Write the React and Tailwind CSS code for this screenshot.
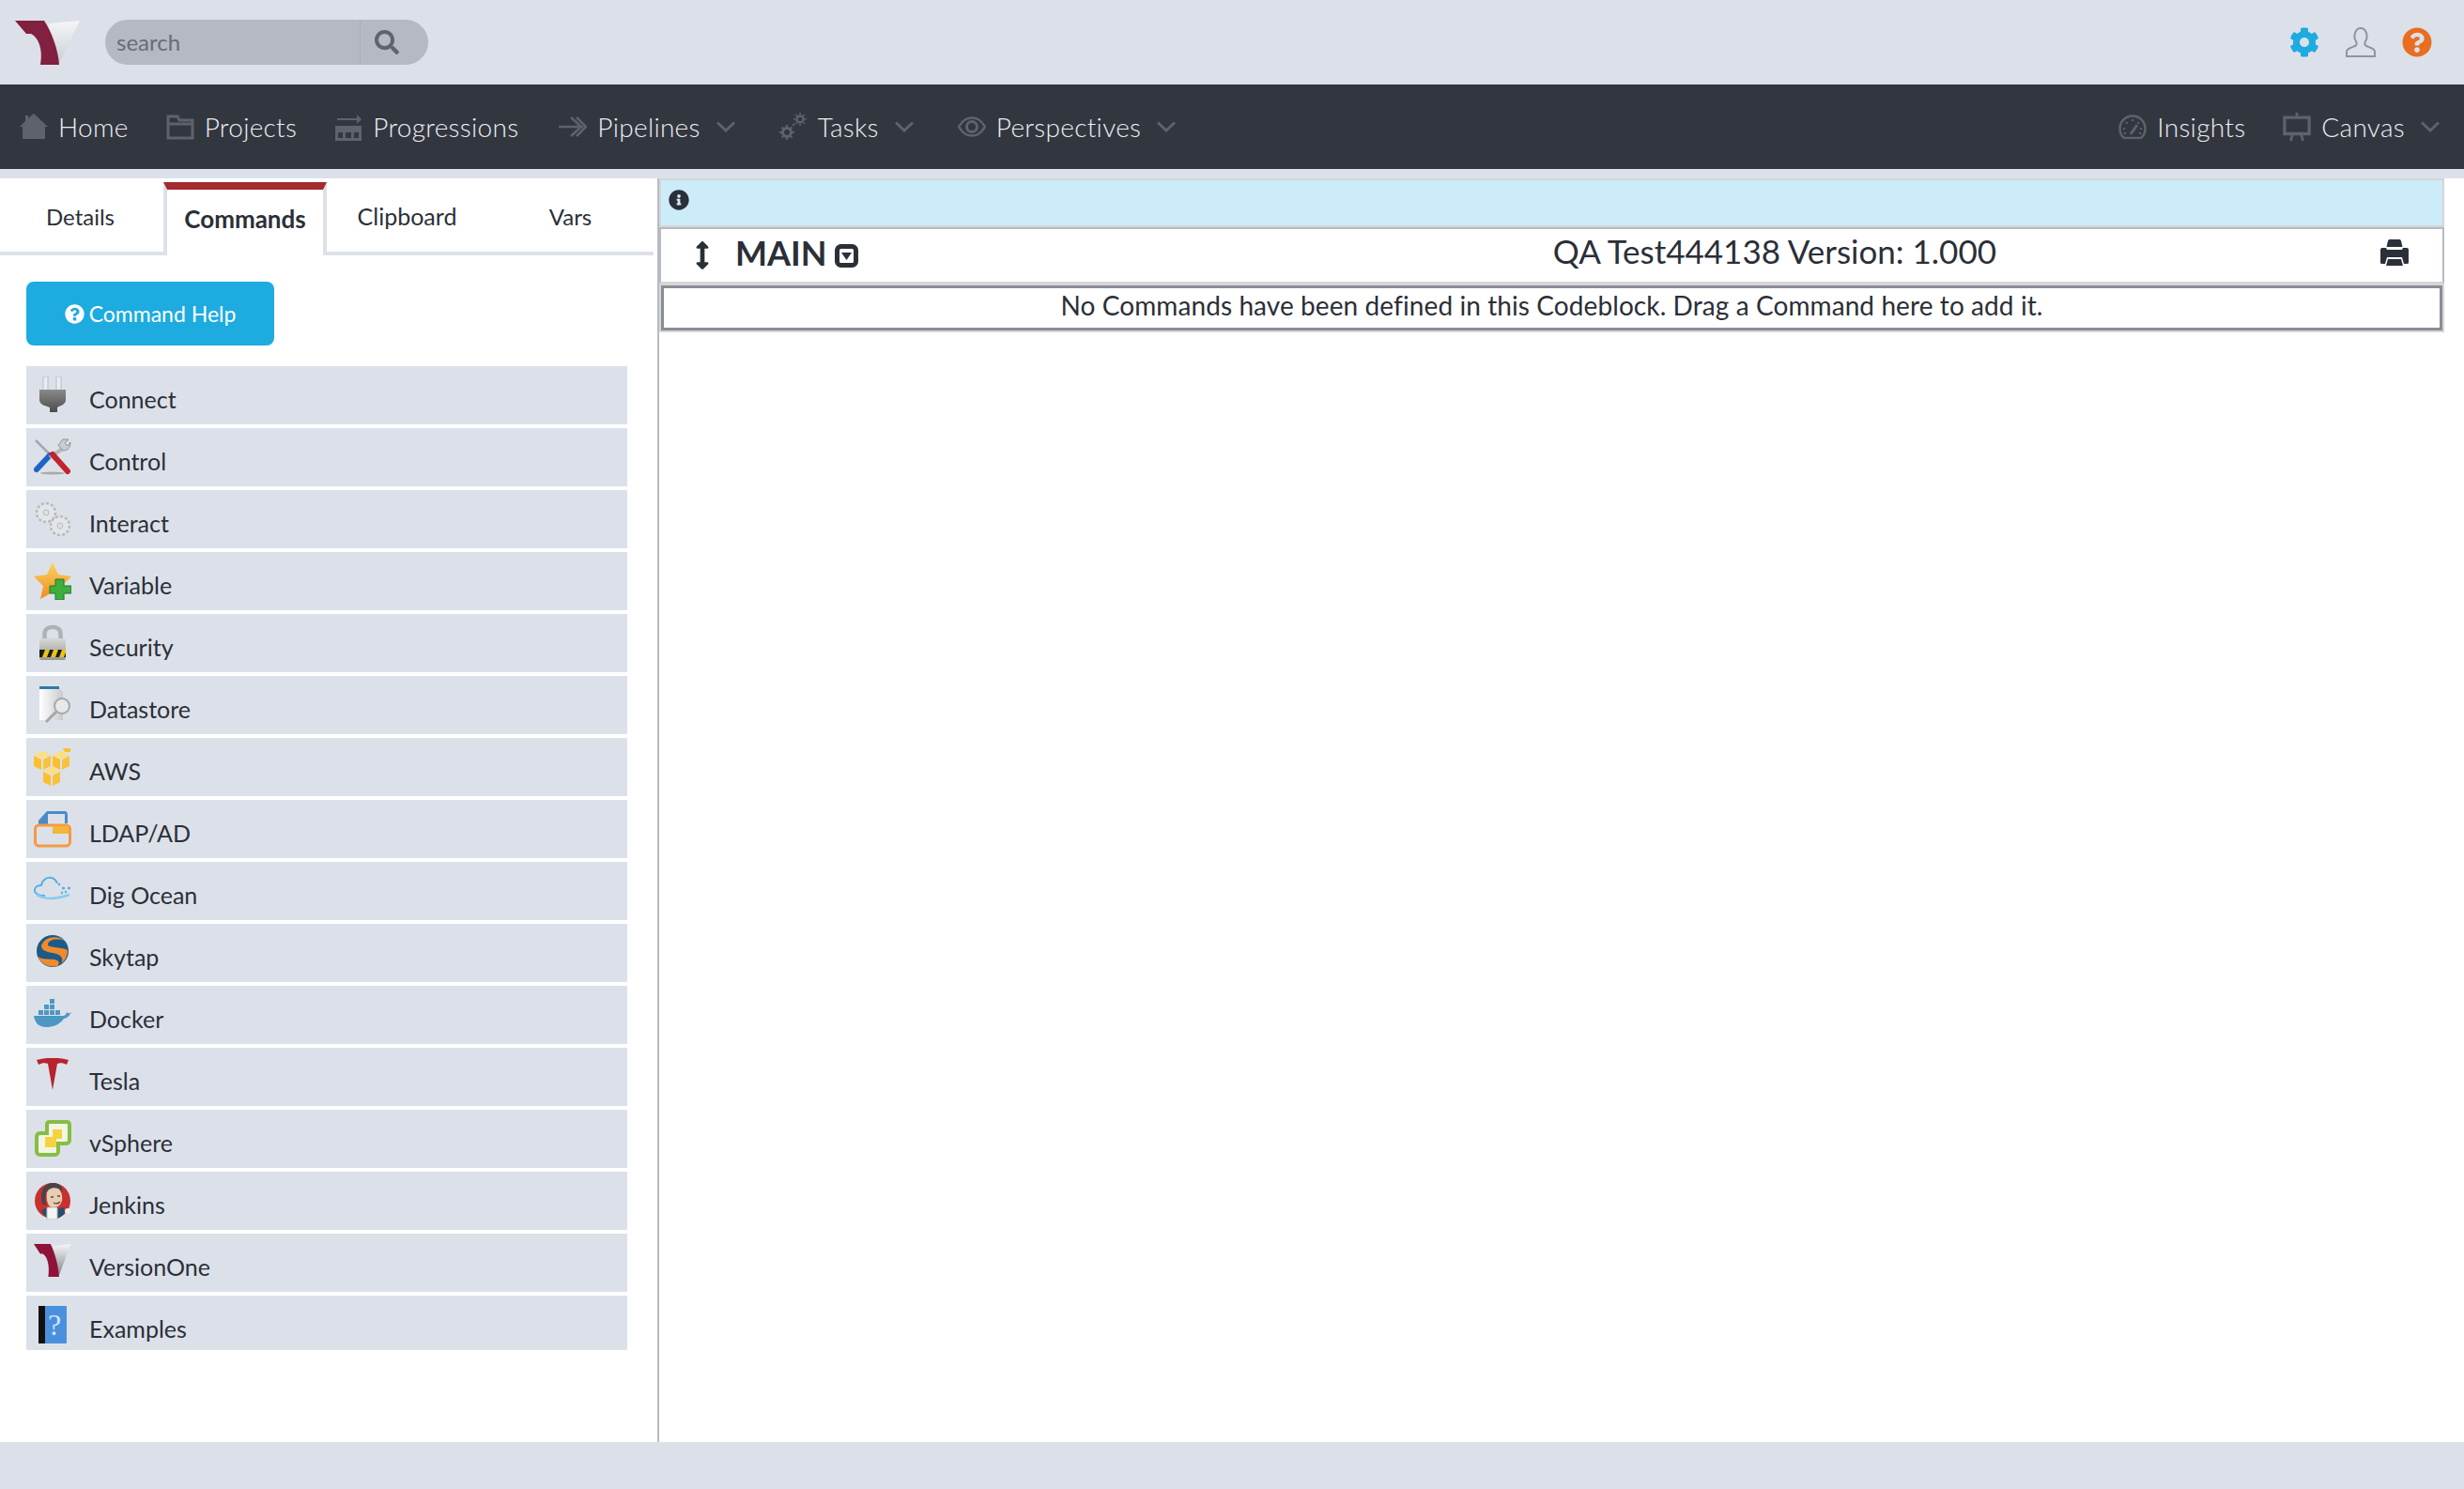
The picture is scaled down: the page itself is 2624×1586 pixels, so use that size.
import {
  FaArrowsAltV,
  FaCog,
  FaInfoCircle,
  FaQuestionCircle,
  FaSearch,
} from 'react-icons/fa';

const Chevron = () => (
  <svg width="20" height="12" viewBox="0 0 20 12" fill="none" stroke="#5d626c" strokeWidth="3">
    <path d="M1 1.5 10 10 19 1.5" />
  </svg>
);

const VersionOneLogo = ({ w = 70, h = 47, id = 'v1', wingEnd = '#c9cdd4', red = '#82203f' }) => (
  <svg width={w} height={h} viewBox="0 0 70 47" preserveAspectRatio="none">
    <defs>
      <linearGradient id={id} x1="0" y1="0" x2="0" y2="1">
        <stop offset="0" stopColor="#f4f6f9" />
        <stop offset="1" stopColor={wingEnd} />
      </linearGradient>
    </defs>
    <path d="M36 3 69 0 46 47H40Z" fill={`url(#${id})`} />
    <path d="M0 0H31C38 10 46 30 47 47H27C30 30 25 18 17 14H12Z" fill={red} />
  </svg>
);

// nav icons
const HomeIcon = () => (
  <svg width="30" height="28" viewBox="0 0 30 28" fill="#5d626c">
    <path d="M15 0 30 14H27V27H3V14H0L6 8V2H9V5Z" />
  </svg>
);
const FolderIcon = () => (
  <svg width="30" height="27" viewBox="0 0 30 27" fill="none" stroke="#5d626c" strokeWidth="3">
    <path d="M2 2H12L14 6H28V25H2Z" />
    <path d="M2 10H28" />
  </svg>
);
const ProgressIcon = () => (
  <svg width="29" height="30" viewBox="0 0 29 30" fill="#5d626c">
    <path d="M2 6H23V2L28 7 23 12V8H2Z" />
    <path d="M0 14H28V30H0ZM3 21V27H8V21ZM11 21V27H17V21ZM20 21V27H25V21Z" fillRule="evenodd" />
  </svg>
);
const PipelineIcon = () => (
  <svg width="30" height="22" viewBox="0 0 30 22" fill="none" stroke="#5d626c" strokeWidth="2.5">
    <path d="M0 11H26M13 1 24 11 13 21M19 1 29 11 19 21" />
  </svg>
);
const TasksIcon = () => (
  <svg width="30" height="30" viewBox="0 0 30 30" fill="none" stroke="#5d626c">
    <circle cx="8" cy="21" r="4.5" strokeWidth="3" />
    <path d="M8 13V29M0 21H16M2.5 15.5 13.5 26.5M13.5 15.5 2.5 26.5" strokeWidth="2" strokeDasharray="2.5 11" />
    <circle cx="22" cy="7" r="3.5" strokeWidth="2.5" />
    <path d="M22 0V14M15 7H29M17 2 27 12M27 2 17 12" strokeWidth="1.6" strokeDasharray="2 10" />
    <circle cx="15" cy="13" r="1" fill="#5d626c" />
  </svg>
);
const EyeIcon = () => (
  <svg width="30" height="22" viewBox="0 0 30 22" fill="none" stroke="#5d626c">
    <path d="M1 11C6 3 10 1.500 15 1.500S24 3 29 11C24 19 20 20.500 15 20.500S6 19 1 11Z" strokeWidth="2.500" />
    <circle cx="15" cy="11" r="5.500" strokeWidth="3" />
  </svg>
);
const GaugeIcon = () => (
  <svg width="30" height="26" viewBox="0 0 30 26" fill="none" stroke="#5d626c">
    <path d="M6 25C2 22 1.500 18 1.500 15A13.500 13.500 0 0 1 28.500 15C28.500 18 28 22 24 25Z" strokeWidth="2.500" />
    <path d="M5 15H7M8 8 9.500 9.500M15 5V7M22 8 20.500 9.500M23 15H25M6 20H8M22 20H24" strokeWidth="2" />
    <path d="M13 21 20 11" strokeWidth="3" />
  </svg>
);
const CanvasIcon = () => (
  <svg width="32" height="32" viewBox="0 0 32 32" fill="none" stroke="#5d626c">
    <path d="M16 0V4" strokeWidth="3" />
    <path d="M2 5.500H30V24H2Z" strokeWidth="3.500" />
    <path d="M11 25 9 32M21 25 23 32" strokeWidth="3" />
  </svg>
);

const UserIcon = () => (
  <svg width="32" height="32" viewBox="0 0 32 32" fill="none" stroke="#8f949d" strokeWidth="2">
    <path d="M1 31V26C1 23 5 22 10 20 12 19 12 17 11 15 9 12 9 9 10 6 11 3 13 1 16 1S21 3 22 6C23 9 23 12 21 15 20 17 20 19 22 20 27 22 31 23 31 26V31Z" />
  </svg>
);

const PrintIcon = () => (
  <svg width="30" height="28" viewBox="0 0 30 28" fill="#2b2f38">
    <path d="M6.500 8 8 1.500Q8.300 0 10 0H20Q21.700 0 22 1.500L23.500 8Z" />
    <path d="M0 11Q0 9 2 9H6L7 11H23L24 9H28Q30 9 30 11V25Q30 26 28 26H25L23 19H7L5 26H2Q0 26 0 25Z" />
    <path d="M8 21H22L24 28H6Z" />
  </svg>
);

const CaretBoxIcon = () => (
  <svg width="25" height="25" viewBox="0 0 25 25">
    <rect x="2.500" y="2.500" width="20" height="20" rx="4" fill="none" stroke="#2b2f38" strokeWidth="5" />
    <path d="M7 9H18L12.500 17Z" fill="#2b2f38" />
  </svg>
);

// command icons, all in a 40x40 box
const PlugIcon = () => (
  <svg width="40" height="40" viewBox="0 0 40 40">
    <defs>
      <linearGradient id="plug" x1="0" y1="0" x2="0" y2="1">
        <stop offset="0" stopColor="#8a8a8a" />
        <stop offset="1" stopColor="#4c4c4c" />
      </linearGradient>
    </defs>
    <path d="M10 0H15V15H10ZM24 0H29V15H24Z" fill="#e8edf3" stroke="#b5bcc6" />
    <path d="M6 14H34V25C34 30 28 31 25 33V38H17V33C12 31 6 30 6 25Z" fill="url(#plug)" />
  </svg>
);
const ToolsIcon = () => (
  <svg width="40" height="40" viewBox="0 0 40 40">
    <ellipse cx="20" cy="37" rx="13" ry="1.500" fill="#a9a9a9" />
    <path d="M2 2 23 23" stroke="#a4a8ae" strokeWidth="2.500" />
    <path d="M17 18 3 33" stroke="#1f62c9" strokeWidth="6" strokeLinecap="round" />
    <path d="M32 10 17 20" stroke="#b5b9be" strokeWidth="4" />
    <path d="M20 17 36 35" stroke="#c3232d" strokeWidth="6" strokeLinecap="round" />
    <path d="M26 7 31 1H37L33 5 36 8 39 4C39 10 36 13 31 13Z" fill="#c9ccd0" stroke="#8f9297" />
  </svg>
);
const Gear = ({ cx, cy, r }) => (
  <g>
    <circle cx={cx} cy={cy} r={r} fill="#e4e5e7" stroke="#b8babd" strokeWidth="2.500" strokeDasharray="3 2.200" />
    <circle cx={cx} cy={cy} r={r * 0.3} fill="#dce1e9" stroke="#b8babd" />
  </g>
);
const GearsIcon = () => (
  <svg width="40" height="40" viewBox="0 0 40 40">
    <Gear cx={13} cy={13} r={10} />
    <Gear cx={28} cy={27} r={10} />
  </svg>
);
const StarIcon = () => (
  <svg width="40" height="40" viewBox="0 0 40 40">
    <defs>
      <linearGradient id="star" x1="0" y1="0" x2="0" y2="1">
        <stop offset="0" stopColor="#fcd35f" />
        <stop offset="1" stopColor="#f08d1f" />
      </linearGradient>
    </defs>
    <path d="M20 0 26 13 40 15 30 25 33 39 20 32 7 39 10 25 0 15 14 13Z" fill="url(#star)" />
    <path d="M23 18H32V25H40V33H32V40H23V33H17V25H23Z" fill="#3fae3c" stroke="#1d7a26" />
  </svg>
);
const LockIcon = () => (
  <svg width="40" height="40" viewBox="0 0 40 40">
    <defs>
      <linearGradient id="lock" x1="0" y1="0" x2="0" y2="1">
        <stop offset="0" stopColor="#d8d9d6" />
        <stop offset="1" stopColor="#96988f" />
      </linearGradient>
    </defs>
    <path d="M11.500 16V10C11.500 0.500 28.500 0.500 28.500 10V16" fill="none" stroke="#aeb1b5" strokeWidth="4.500" />
    <rect x="6" y="15" width="28" height="23" rx="2" fill="url(#lock)" />
    <rect x="6" y="27" width="28" height="8" fill="#1a1a1a" />
    <path d="M12 27H17L14 35H9ZM21 27H26L23 35H18ZM30 27H34V30L32 35H27Z" fill="#e9c21c" />
  </svg>
);
const DataIcon = () => (
  <svg width="40" height="40" viewBox="0 0 40 40">
    <defs>
      <linearGradient id="doc" x1="0" y1="0" x2="1" y2="0">
        <stop offset="0" stopColor="#ffffff" />
        <stop offset="1" stopColor="#c8cacd" />
      </linearGradient>
    </defs>
    <path d="M6 0H26L31 6V36H6Z" fill="url(#doc)" />
    <rect x="6" y="0" width="21" height="3" fill="#2e7ba6" />
    <circle cx="30" cy="21" r="8" fill="#e7e8ea" stroke="#a5a7aa" strokeWidth="2" />
    <path d="M24 27 13 38" stroke="#a5a7aa" strokeWidth="3" />
  </svg>
);
const Cube = ({ x, y }) => (
  <g transform={`translate(${x} ${y})`}>
    <path d="M9 0 18 4 9 8 0 4Z" fill="#fddf80" />
    <path d="M0 5 8 9V20L0 16Z" fill="#fbbf2a" />
    <path d="M18 5 10 9V20L18 16Z" fill="#f9c23c" />
  </g>
);
const AwsIcon = () => (
  <svg width="40" height="40" viewBox="0 0 40 40">
    <Cube x={0} y={3} />
    <Cube x={20} y={3} />
    <Cube x={10} y={20} />
    <path d="M31 0H39V4H33Z" fill="#fbbf2a" />
  </svg>
);
const LdapIcon = () => (
  <svg width="40" height="40" viewBox="0 0 40 40">
    <path d="M5 16V11L14 1H33C35 1 36 3 36 5V14H33V4H15V16Z" fill="#4b8ac9" />
    <rect x="1.500" y="16" width="37" height="22" rx="4" fill="#dce1e9" stroke="#f49a42" strokeWidth="3" />
    <rect x="20" y="17" width="17" height="8" fill="#f2b63c" />
  </svg>
);
const CloudIcon = () => (
  <svg width="40" height="40" viewBox="0 0 40 40" fill="none">
    <path d="M12 25C4 25 0 22 1 18 2 15 5 14 8 14 9 8 14 5 19 6 22 7 24 9 25 12" stroke="#58b0e3" strokeWidth="2" />
    <path d="M3 24C12 30 26 28 38 24" stroke="#8acbef" strokeWidth="2.500" />
    <path d="M26 13 28 13M30 17H33M36 17H39M29 22H31M33 21H35" stroke="#58b0e3" strokeWidth="2.500" />
  </svg>
);
const SkytapIcon = () => (
  <svg width="40" height="40" viewBox="0 0 40 40">
    <circle cx="20" cy="18" r="17" fill="#1b5b87" />
    <path d="M8 12C11 3 25 0 33 7 25 4 15 6 15 11 15 15 28 13 36 17 36 23 33 29 29 31 33 25 27 21 20 20 13 19 8 17 8 12Z" fill="#f08a2c" />
    <path d="M4 24C10 28 18 26 22 27 27 28 28 31 25 34 17 36 8 32 4 24Z" fill="#f08a2c" />
  </svg>
);
const DockerIcon = () => (
  <svg width="40" height="40" viewBox="0 0 40 40" fill="#4d97c4">
    <path d="M0 21H31C33 21 35 19 35 17 37 19 39 18 40 17 38 21 35 24 32 24 27 31 20 33 13 33 5 33 1 28 0 21Z" />
    <path d="M5 15H10V20H5ZM11 15H16V20H11ZM17 15H22V20H17ZM23 15H28V20H23ZM11 9H16V14H11ZM17 9H22V14H17ZM17 3H22V8H17Z" />
  </svg>
);
const TeslaIcon = () => (
  <svg width="40" height="40" viewBox="0 0 40 40">
    <path d="M3 2C14 -1 26 -1 37 2L35 7C31 5 28 5 25 6L20 34 15 6C12 5 9 5 5 7Z" fill="#b9232e" />
  </svg>
);
const VsphereIcon = () => (
  <svg width="40" height="40" viewBox="0 0 40 40">
    <path d="M17 2H35C37 2 38 3 38 5V21C38 23 37 25 35 25H26V33C26 35 25 37 23 37H6C4 37 3 35 3 33V18C3 15 5 14 7 14H14V5C14 3 15 2 17 2Z" fill="#f1f5e4" stroke="#86bd45" strokeWidth="4" />
    <path d="M20 10H30V20H24V29H12V18H20Z" fill="#f6d33c" />
  </svg>
);
const JenkinsIcon = () => (
  <svg width="40" height="40" viewBox="0 0 40 40">
    <circle cx="20" cy="20" r="19" fill="#c8312e" />
    <path d="M8 15C8 6 14 1 21 1 28 1 31 6 30 10 25 8 18 9 13 11 12 17 12 22 14 25L10 24C8 22 8 19 8 15Z" fill="#4a4446" />
    <path d="M14 11C16 5 26 5 28 9 31 14 31 20 28 24 26 27 20 28 17 26 14 23 13 17 14 11Z" fill="#e9cdb3" />
    <path d="M18 16H21M25 15H28M21 22C24 24 26 23 28 21" stroke="#5b4a42" strokeWidth="1.500" fill="none" />
    <path d="M8 31C11 27 16 27 20 28 24 29 28 28 32 27L33 33C30 37 25 40 20 40 15 40 11 36 8 31Z" fill="#264f6c" />
    <rect x="14" y="27" width="11" height="13" rx="1" fill="#f4f4f4" stroke="#b9b9b9" />
    <circle cx="36" cy="31" r="3" fill="#eee" />
  </svg>
);
const BookIcon = () => (
  <svg width="40" height="40" viewBox="0 0 40 40">
    <rect x="5" y="0" width="30" height="40" rx="1" fill="#4b90dd" />
    <rect x="5" y="0" width="7" height="40" fill="#111" />
    <text x="15" y="31" fontSize="32" fontFamily="'Liberation Serif', serif" fill="#cfe3fa">?</text>
  </svg>
);

const commands = [
  ['Connect', <PlugIcon />],
  ['Control', <ToolsIcon />],
  ['Interact', <GearsIcon />],
  ['Variable', <StarIcon />],
  ['Security', <LockIcon />],
  ['Datastore', <DataIcon />],
  ['AWS', <AwsIcon />],
  ['LDAP/AD', <LdapIcon />],
  ['Dig Ocean', <CloudIcon />],
  ['Skytap', <SkytapIcon />],
  ['Docker', <DockerIcon />],
  ['Tesla', <TeslaIcon />],
  ['vSphere', <VsphereIcon />],
  ['Jenkins', <JenkinsIcon />],
  ['VersionOne', <VersionOneLogo w={40} h={35} id="v1small" wingEnd="#7c7f84" red="#8f1238" />],
  ['Examples', <BookIcon />],
];

const NavItem = ({ icon, label, chevron, className }) => (
  <div className={`flex items-center ${className}`}>
    <span className="flex w-[30px] justify-center">{icon}</span>
    <span className="ml-[11px] text-[28px] font-light tracking-[0.3px] text-[#eceef1]">{label}</span>
    {chevron && (
      <span className="ml-[17px]">
        <Chevron />
      </span>
    )}
  </div>
);

export default function App() {
  return (
    <div className="flex h-[1586px] flex-col bg-[#dce1e9] font-['Lato','Noto_Sans',sans-serif] text-[#2b2f38]">
      {/* top bar */}
      <div className="flex h-[90px] items-center pl-4 pr-[34px]">
        <VersionOneLogo />
        <div className="ml-[26px] flex h-12 w-[344px] overflow-hidden rounded-full bg-[#b4b9c2]">
          <div className="flex w-[272px] items-center border-r border-[#a9aeb8] pl-[12px] text-[24px] text-[#686d76]">search</div>
          <div className="flex flex-1 items-center pl-[15px] text-[26px] text-[#5f646d]">
            <FaSearch />
          </div>
        </div>
        <div className="ml-auto flex items-center gap-[28px]">
          <FaCog className="text-[32px] text-[#1dabe0]" />
          <UserIcon />
          <FaQuestionCircle className="text-[32px] text-[#e96e20]" />
        </div>
      </div>

      {/* nav */}
      <div className="flex h-[90px] items-center bg-[#32363f] pl-[21px] pr-[26px]">
        <NavItem icon={<HomeIcon />} label="Home" />
        <NavItem icon={<FolderIcon />} label="Projects" className="ml-[40px]" />
        <NavItem icon={<ProgressIcon />} label="Progressions" className="ml-[40px]" />
        <NavItem icon={<PipelineIcon />} label="Pipelines" chevron className="ml-[43px]" />
        <NavItem icon={<TasksIcon />} label="Tasks" chevron className="ml-[47px]" />
        <NavItem icon={<EyeIcon />} label="Perspectives" chevron className="ml-[47px]" />
        <NavItem icon={<GaugeIcon />} label="Insights" className="ml-auto" />
        <NavItem icon={<CanvasIcon />} label="Canvas" chevron className="ml-[40px]" />
      </div>

      {/* main */}
      <div className="mt-[10px] flex h-[1346px] bg-white">
        <div className="w-[700px] shrink-0">
          <div className="flex h-[82px] w-[696px] items-end border-b-4 border-[#dce1e9]">
            <div className="flex h-[78px] w-[174px] items-center justify-center pr-[3px] pt-1 text-[24px]">Details</div>
            <div className="relative -mb-1 flex h-[78px] w-[174px] items-center justify-center border-x-4 border-t-8 border-x-[#dce1e9] border-t-[#a32a2e] bg-white pb-2 text-[26px] font-bold">
              Commands
            </div>
            <div className="flex h-[78px] w-[174px] items-center justify-center pr-[3px] pt-1 text-[25px]">Clipboard</div>
            <div className="flex h-[78px] w-[174px] items-center justify-center pr-[3px] pt-1 text-[24px]">Vars</div>
          </div>
          <button className="ml-7 mt-7 flex h-[68px] w-[264px] items-center justify-center gap-[5px] rounded-lg bg-[#1dabe0] text-[23px] text-white">
            <FaQuestionCircle className="text-[21px]" />
            Command Help
          </button>
          <div className="ml-7 mt-[22px] flex w-[640px] flex-col gap-1">
            {commands.map(([label, icon], i) => (
              <div key={label} className={`flex items-start bg-[#dce1e9] ${i === 15 ? 'h-[58px]' : 'h-[62px]'}`}>
                <span className="ml-2 mt-[11px] flex h-10 w-10 shrink-0 justify-center">{icon}</span>
                <span className="ml-[19px] mt-5 text-[25px] leading-[30px] text-[#2b2f38]">{label}</span>
              </div>
            ))}
          </div>
        </div>

        <div className="w-[1903px] border-l-2 border-[#b6bac3]">
          <div className="flex h-[52px] items-center border-2 border-[#d6d6d6] bg-[#cbecf8] pb-[6px] pl-2 text-[22px]">
            <FaInfoCircle />
          </div>
          <div className="flex h-[60px] items-center border-y-2 border-r-2 border-l-2 border-[#b6bac3] border-b-[#d6d6d6] pl-[29px] pr-[36px]">
            <FaArrowsAltV className="text-[30px]" />
            <span className="ml-[20px] pb-[6px] text-[36px] font-bold leading-none">MAIN</span>
            <span className="ml-[9px]">
              <CaretBoxIcon />
            </span>
            <span className="ml-auto mr-[409px] pb-[10px] text-[35px] leading-none">QA Test444138 Version: 1.000</span>
            <span className="pb-[6px]">
              <PrintIcon />
            </span>
          </div>
          <div className="border-2 border-[#d6d6d6]">
            <div className="flex h-[48px] items-center justify-center border-[3px] border-[#8a8d96] pb-[6px] text-[28px] leading-none tracking-[0.09px]">
              No Commands have been defined in this Codeblock. Drag a Command here to add it.
            </div>
          </div>
        </div>
      </div>
    </div>
  );
}
